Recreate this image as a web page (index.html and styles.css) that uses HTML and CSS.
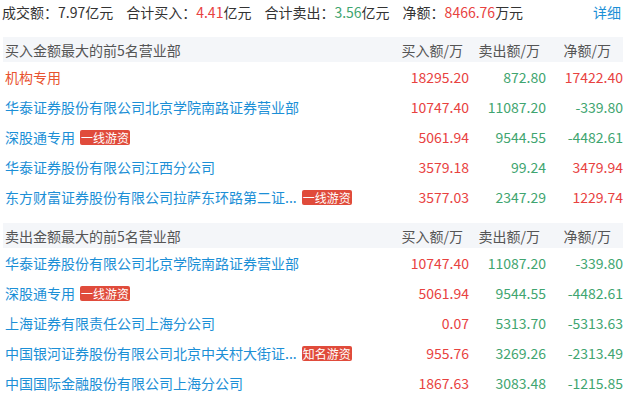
FILE: index.html
```html
<!DOCTYPE html>
<html>
<head>
<meta charset="utf-8">
<link rel="stylesheet" href="styles.css">
</head>
<body>
<div class="summary">
  <div class="stats">
    <span class="stat">成交额：7.97亿元</span>
    <span class="stat">合计买入：<em class="red">4.41</em>亿元</span>
    <span class="stat">合计卖出：<em class="green">3.56</em>亿元</span>
    <span class="stat">净额：<em class="red">8466.76</em>万元</span>
  </div>
  <a class="detail">详细</a>
</div>

<div class="table">
  <div class="row head"><span class="name">买入金额最大的前5名营业部</span><span class="num h1">买入额/万</span><span class="num h2">卖出额/万</span><span class="num h3">净额/万</span></div>
  <div class="row"><span class="name org">机构专用</span><span class="num red">18295.20</span><span class="num green">872.80</span><span class="num red">17422.40</span></div>
  <div class="row"><span class="name">华泰证券股份有限公司北京学院南路证券营业部</span><span class="num red">10747.40</span><span class="num green">11087.20</span><span class="num green">-339.80</span></div>
  <div class="row"><span class="name">深股通专用<i class="tag">一线游资</i></span><span class="num red">5061.94</span><span class="num green">9544.55</span><span class="num green">-4482.61</span></div>
  <div class="row"><span class="name">华泰证券股份有限公司江西分公司</span><span class="num red">3579.18</span><span class="num green">99.24</span><span class="num red">3479.94</span></div>
  <div class="row"><span class="name">东方财富证券股份有限公司拉萨东环路第二证...<i class="tag">一线游资</i></span><span class="num red">3577.03</span><span class="num green">2347.29</span><span class="num red">1229.74</span></div>
</div>

<div class="table second">
  <div class="row head"><span class="name">卖出金额最大的前5名营业部</span><span class="num h1">买入额/万</span><span class="num h2">卖出额/万</span><span class="num h3">净额/万</span></div>
  <div class="row"><span class="name">华泰证券股份有限公司北京学院南路证券营业部</span><span class="num red">10747.40</span><span class="num green">11087.20</span><span class="num green">-339.80</span></div>
  <div class="row"><span class="name">深股通专用<i class="tag">一线游资</i></span><span class="num red">5061.94</span><span class="num green">9544.55</span><span class="num green">-4482.61</span></div>
  <div class="row"><span class="name">上海证券有限责任公司上海分公司</span><span class="num red">0.07</span><span class="num green">5313.70</span><span class="num green">-5313.63</span></div>
  <div class="row"><span class="name">中国银河证券股份有限公司北京中关村大街证...<i class="tag">知名游资</i></span><span class="num red">955.76</span><span class="num green">3269.26</span><span class="num green">-2313.49</span></div>
  <div class="row"><span class="name">中国国际金融股份有限公司上海分公司</span><span class="num red">1867.63</span><span class="num green">3083.48</span><span class="num green">-1215.85</span></div>
</div>
</body>
</html>
```

FILE: styles.css
```css
* { box-sizing: border-box; }
body {
  margin: 0;
  width: 630px;
  background: #fff;
  font-family: "Noto Sans CJK SC", sans-serif;
  font-size: 14px;
  color: #333;
}
em { font-style: normal; }
.red { color: #e8423f; }
.green { color: #3fa570; }
.summary {
  display: flex;
  justify-content: space-between;
  align-items: center;
  height: 24px;
  padding: 0 9px 0 2px;
  line-height: 24px;
}
.stats { display: flex; gap: 13px; }
.detail { color: #1c8fd6; }
.table {
  margin: 13px 7px 0 3px;
}
.table.second { margin-top: 11px; }
.row {
  display: grid;
  grid-template-columns: 1fr 80px 77px 77px;
  height: 30px;
  align-items: center;
  line-height: 20px;
}
.row.head {
  height: 25px;
  background: #f4f6f9;
  color: #555;
}
.name {
  padding-left: 2px;
  color: #1c8fd6;
  white-space: nowrap;
  display: flex;
  align-items: center;
}
.head .name { color: #555; }
.name.org { color: #e8532f; }
.num { text-align: right; padding-right: 0; }
.head .h1 { padding-right: 6px; }
.head .h2 { padding-right: 6px; }
.head .h3 { padding-right: 12px; }
.tag {
  font-style: normal;
  background: #e04b3b;
  color: #fff;
  font-size: 12px;
  line-height: 15px;
  height: 15px;
  padding: 0 1px;
  margin-left: 5px;
  border-radius: 2px;
}
```
